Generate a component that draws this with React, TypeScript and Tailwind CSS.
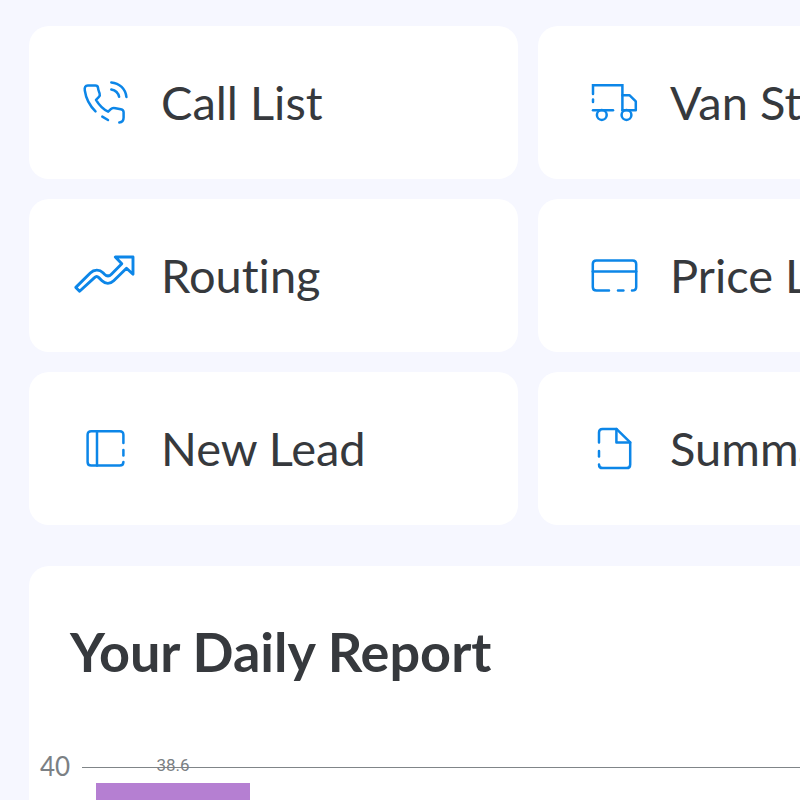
import type { ReactNode } from 'react';

const Icon = ({ children }: { children: ReactNode }) => (
  <svg
    viewBox="0 0 65 65"
    className="w-[65px] h-[65px] shrink-0 text-[#0c86e8]"
    fill="none"
    stroke="currentColor"
    strokeWidth="2.5"
    strokeLinecap="round"
    strokeLinejoin="round"
    aria-hidden="true"
  >
    {children}
  </svg>
);

const CallIcon = () => (
  <Icon>
    <path d="M22.5 41.3C16.5 35.5 12.8 27.5 11.8 20.5C11.3 17.3 12.3 15.6 14.8 15.6H22.3C24 15.6 24.8 16.4 25 17.8C25.2 20 25.9 21.5 26.6 23.3C27.2 25 26.9 26 25.7 27.2L23 29.8C26 35 30 39 35.2 41.7L37.8 39.2C38.8 38.2 39.8 37.8 41.2 38.1L47.8 39.3C49.8 39.7 50.6 40.6 50.6 42.3V47.6C50.6 50.7 49 52.4 46.3 52.4" />
    <path d="M29.3 46.6L35 50" />
    <path d="M38.3 12.4C46.5 13 52.6 19 53.4 27" />
    <path d="M38.3 19.4C42.3 20.2 45.3 22.8 46.1 26.8" />
  </Icon>
);

const RoutingIcon = () => (
  <Icon>
    <g strokeWidth="2.9">
      <path d="M2.8 44.4L17.3 30C21 26.2 26.5 26.2 30 29.7L31.5 31.2C33.8 33.4 36.2 33.4 38.4 31.2L48.8 20.8L42.3 14H60V31.3L53.5 25.3L40.7 37.8C37.3 41.2 32.4 41.2 29 37.8L25.8 34.6C24.3 33.1 23 33.1 21.5 34.6L6.6 48.3Z" />
    </g>
  </Icon>
);

const NewLeadIcon = () => (
  <Icon>
    <path d="M50.4 27V18.8C50.4 16.4 49 15.2 46.8 15.2H18.2C15.8 15.2 14.6 16.6 14.6 18.8V46C14.6 48.4 16 49.6 18.2 49.6H46.8C49 49.6 50.4 48.2 50.4 46" />
    <path d="M50.4 34V39.6" />
    <path d="M24 15.2V49.6" />
  </Icon>
);

const VanIcon = () => (
  <Icon>
    <path d="M11 24V15.2H40.4V40.2" strokeLinejoin="miter" />
    <path d="M11 29.6V32" />
    <path d="M11 40.2H31" />
    <path d="M40.4 25.2H47.4L53.8 31.4V40.2H40.4" />
    <circle cx="19.8" cy="45" r="4.9" />
    <circle cx="44.5" cy="45" r="4.9" />
  </Icon>
);

const PriceIcon = () => (
  <Icon>
    <path d="M27 47.6H14.6C12 47.6 10.8 46.2 10.8 44V21C10.8 18.6 12.2 17.4 14.4 17.4H50.6C53 17.4 54.2 18.8 54.2 21V44C54.2 46.2 52.6 47.6 50 47.6" />
    <path d="M36 47.6H41.4" />
    <path d="M10.8 28.6H54.2" />
  </Icon>
);

const SummaryIcon = () => (
  <Icon>
    <path d="M17 26.6V16.6C17 14.2 18.4 12.9 20.6 12.9H34.4L48.2 26.4V48.4C48.2 50.8 46.8 52.1 44.6 52.1H20.6C18.4 52.1 17 50.8 17 48.4" />
    <path d="M17 35V40.6" />
    <path d="M34.4 12.9V26.4H48.2" />
  </Icon>
);

const tiles = [
  { name: 'Call List', href: '#call-list', icon: CallIcon },
  { name: 'Van Stock', href: '#van-stock', icon: VanIcon },
  { name: 'Routing', href: '#routing', icon: RoutingIcon },
  { name: 'Price List', href: '#price-list', icon: PriceIcon },
  { name: 'New Lead', href: '#new-lead', icon: NewLeadIcon },
  { name: 'Summary', href: '#summary', icon: SummaryIcon }
];

const DailyReport = () => (
  <section className="bg-white rounded-[20px] mt-[41px] pt-14 pb-10">
    <h2 className="px-[41px] text-[54px] leading-[60px] font-bold">Your Daily Report</h2>

    {/* Chart */}
    <div className="flex items-start pl-[11px] mt-[69px]">
      <span className="w-[42px] text-[26px] leading-[30px] text-[#7b8084]">40</span>
      <div className="flex-1 mt-4 border-t border-[#808588] pl-[14px]">
        <div className="relative w-[154px] h-80 mt-[15px] bg-[#b57fd2]">
          <span className="absolute inset-x-0 -top-7 text-center text-[17px] leading-5 font-['Roboto',sans-serif] text-[#7b8084]">
            38.6
          </span>
        </div>
      </div>
    </div>
  </section>
);

const App = () => {
  return (
    <div className="h-screen overflow-hidden bg-[#f6f7ff] text-[#36393d] font-['Lato',sans-serif]">
      <main className="min-w-[1056px] px-[29px] pt-[26px]">
        {/* Shortcuts */}
        <nav className="grid grid-cols-2 gap-5">
          {tiles.map((tile) => (
            <a
              key={tile.name}
              href={tile.href}
              className="flex items-center gap-[23px] p-11 bg-white rounded-[20px]"
            >
              <tile.icon />
              <span className="text-[47px] leading-[65px] whitespace-nowrap [font-variant-ligatures:none]">
                {tile.name}
              </span>
            </a>
          ))}
        </nav>

        <DailyReport />
      </main>
    </div>
  );
};

export default App;
